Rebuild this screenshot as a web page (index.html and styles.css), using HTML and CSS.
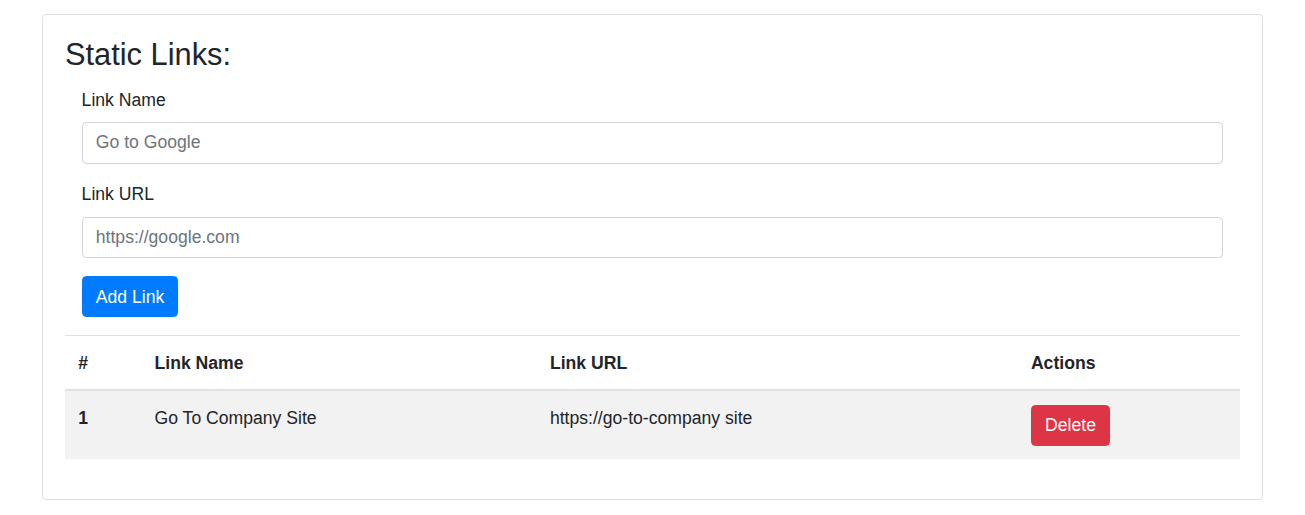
FILE: index.html
```html
<!DOCTYPE html>
<html lang="en">
<head>
<meta charset="utf-8">
<title>Static Links</title>
<link rel="stylesheet" href="styles.css">
</head>
<body>
<div class="page">
  <div class="card">
    <div class="card-body">
      <h3 class="title">Static Links:</h3>
      <form class="link-form">
        <div class="form-group">
          <label class="label" for="name">Link Name</label>
          <input class="input" id="name" type="text" placeholder="Go to Google">
        </div>
        <div class="form-group">
          <label class="label" for="url">Link URL</label>
          <input class="input" id="url" type="text" placeholder="https://google.com">
        </div>
        <button type="button" class="btn btn-primary">Add Link</button>
      </form>
      <table class="table">
        <thead>
          <tr>
            <th class="c1">#</th>
            <th class="c2">Link Name</th>
            <th class="c3">Link URL</th>
            <th class="c4">Actions</th>
          </tr>
        </thead>
        <tbody>
          <tr>
            <th class="rowhead">1</th>
            <td>Go To Company Site</td>
            <td>https://go-to-company site</td>
            <td><button type="button" class="btn btn-danger">Delete</button></td>
          </tr>
        </tbody>
      </table>
    </div>
  </div>
</div>
</body>
</html>
```

FILE: styles.css
```css
html, body {
  margin: 0;
  padding: 0;
  background: #fff;
}
body {
  font-family: "Liberation Sans", Arial, sans-serif;
  font-size: 17.6px;
  line-height: 1.5;
  color: #212529;
}
.page {
  padding: 14px 42px 0 42px;
}
.card {
  border: 1px solid rgba(0, 0, 0, 0.125);
  border-radius: 4.4px;
  background: #fff;
}
.card-body {
  padding: 22px;
}
.title {
  margin: 0 0 12.8px 0;
  font-size: 30.8px;
  font-weight: 500;
  line-height: 1.2;
}
.link-form {
  padding: 0 16.6px;
  margin: 0 0 17.6px 0;
}
.form-group {
  margin-bottom: 17.6px;
}
.label {
  display: inline-block;
  margin-bottom: 8.8px;
}
.input {
  display: block;
  box-sizing: border-box;
  width: 100%;
  height: 41.8px;
  padding: 6.6px 13.2px;
  font-family: inherit;
  font-size: 17.6px;
  line-height: 1.5;
  color: #495057;
  background: #fff;
  border: 1.1px solid #ced4da;
  border-radius: 4.4px;
  margin: 0;
}
.input::placeholder {
  color: #6c757d;
  opacity: 1;
}
.btn {
  display: inline-block;
  box-sizing: border-box;
  padding: 6.6px 13.2px;
  font-family: inherit;
  font-size: 17.6px;
  line-height: 1.5;
  border: 1.1px solid transparent;
  border-radius: 4.4px;
  color: #fff;
  vertical-align: middle;
  margin: 0;
  cursor: pointer;
}
.btn-primary {
  background: #007bff;
  border-color: #007bff;
}
.btn-danger {
  background: #dc3545;
  border-color: #dc3545;
}
.table {
  width: 100%;
  border-collapse: collapse;
  margin-bottom: 17.6px;
  color: #212529;
}
.table th,
.table td {
  padding: 13.2px;
  text-align: left;
  vertical-align: top;
  border-top: 1.1px solid #dee2e6;
}
.table thead th {
  vertical-align: bottom;
  border-bottom: 2.2px solid #dee2e6;
  font-weight: 700;
  padding-top: 14px;
  padding-bottom: 12.6px;
}
.table tbody th,
.table tbody td {
  padding-top: 13.8px;
  padding-bottom: 12.6px;
}
.table .rowhead {
  font-weight: 700;
}
.table tbody tr:nth-of-type(odd) {
  background: rgba(0, 0, 0, 0.05);
}
.c1 { width: 50px; }
.c2 { width: 369px; }
.c3 { width: 454.6px; }
```
